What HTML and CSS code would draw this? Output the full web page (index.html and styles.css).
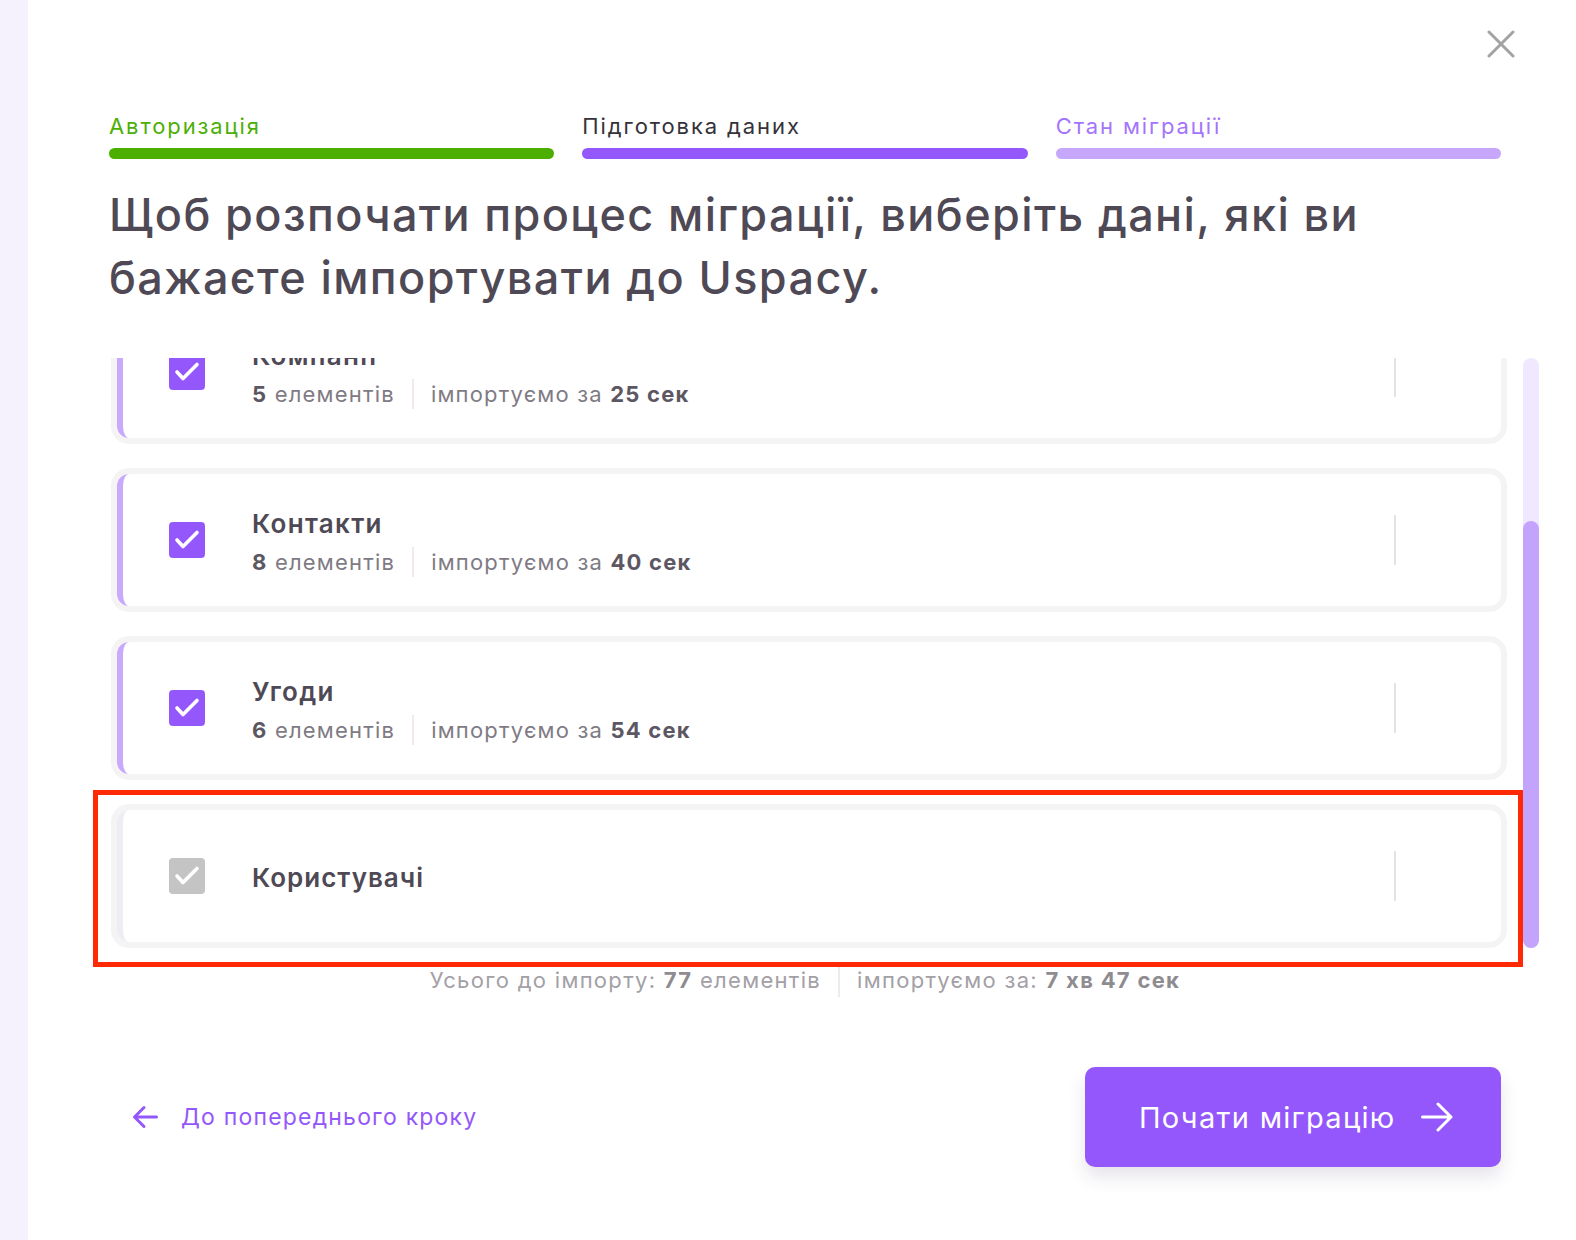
FILE: index.html
```html
<!DOCTYPE html>
<html lang="uk">
<head>
<meta charset="utf-8">
<title>Міграція даних</title>
<link rel="stylesheet" href="styles.css">
</head>
<body>
<div class="page">
  <aside class="side"></aside>
  <main class="modal">
    <div class="modal-top">
      <button class="close" aria-label="Закрити">
        <svg viewBox="0 0 28 28" width="28" height="28"><path d="M2 2 L26 26 M26 2 L2 26" fill="none" stroke="#a3a3a3" stroke-width="3" stroke-linecap="round"/></svg>
      </button>
    </div>
    <ol class="steps">
      <li class="step step-done"><span class="step-label">Авторизація</span><span class="step-bar"></span></li>
      <li class="step step-current"><span class="step-label">Підготовка даних</span><span class="step-bar"></span></li>
      <li class="step step-next"><span class="step-label">Стан міграції</span><span class="step-bar"></span></li>
    </ol>
    <h1 class="title">Щоб розпочати процес міграції, виберіть дані, які ви бажаєте імпортувати до Uspacy.</h1>
    <div class="list-area">
      <div class="scroll">
        <div class="list">
          <div class="card">
            <div class="card-body">
              <span class="check"><svg viewBox="0 0 36 36" width="36" height="36"><polyline points="8,18 14,24.5 28,10.5" fill="none" stroke="#fff" stroke-width="3.6" stroke-linecap="round" stroke-linejoin="round"/></svg></span>
              <div class="info">
                <div class="name">Компанії</div>
                <div class="meta"><span><b>5</b> елементів</span><span class="sep"></span><span>імпортуємо за <b>25 сек</b></span></div>
              </div>
              <span class="divider"></span>
            </div>
          </div>
          <div class="card">
            <div class="card-body">
              <span class="check"><svg viewBox="0 0 36 36" width="36" height="36"><polyline points="8,18 14,24.5 28,10.5" fill="none" stroke="#fff" stroke-width="3.6" stroke-linecap="round" stroke-linejoin="round"/></svg></span>
              <div class="info">
                <div class="name">Контакти</div>
                <div class="meta"><span><b>8</b> елементів</span><span class="sep"></span><span>імпортуємо за <b>40 сек</b></span></div>
              </div>
              <span class="divider"></span>
            </div>
          </div>
          <div class="card">
            <div class="card-body">
              <span class="check"><svg viewBox="0 0 36 36" width="36" height="36"><polyline points="8,18 14,24.5 28,10.5" fill="none" stroke="#fff" stroke-width="3.6" stroke-linecap="round" stroke-linejoin="round"/></svg></span>
              <div class="info">
                <div class="name">Угоди</div>
                <div class="meta"><span><b>6</b> елементів</span><span class="sep"></span><span>імпортуємо за <b>54 сек</b></span></div>
              </div>
              <span class="divider"></span>
            </div>
          </div>
          <div class="card card-disabled">
            <div class="card-body">
              <span class="check"><svg viewBox="0 0 36 36" width="36" height="36"><polyline points="8,18 14,24.5 28,10.5" fill="none" stroke="#fff" stroke-width="3.6" stroke-linecap="round" stroke-linejoin="round"/></svg></span>
              <div class="info">
                <div class="name">Користувачі</div>
              </div>
              <span class="divider"></span>
            </div>
          </div>
        </div>
      </div>
      <div class="scrollbar"><div class="thumb"></div></div>
    </div>
    <p class="summary">Усього до імпорту: <b>77</b> елементів<span class="sep"></span>імпортуємо за: <b>7 хв 47 сек</b></p>
    <div class="actions">
      <a class="back" href="#">
        <svg viewBox="0 0 26 24" width="26" height="24"><path d="M24.5 12 H2.5 M12 2.5 L2.5 12 L12 21.5" fill="none" stroke="#9457fb" stroke-width="3" stroke-linecap="round" stroke-linejoin="round"/></svg>
        <span>До попереднього кроку</span>
      </a>
      <button class="start">
        <span>Почати міграцію</span>
        <svg viewBox="0 0 32 30" width="32" height="30"><path d="M1.5 15 H30 M17 2 L30 15 L17 28" fill="none" stroke="#fff" stroke-width="3" stroke-linecap="round" stroke-linejoin="round"/></svg>
      </button>
    </div>
  </main>
</div>
<div class="highlight"></div>
</body>
</html>
```

FILE: styles.css
```css
* { box-sizing: border-box; }

html, body {
  margin: 0;
  padding: 0;
  background: #ffffff;
}

body {
  font-family: Inter, "Noto Sans", "DejaVu Sans", sans-serif;
  color: #4e4955;
  position: relative;
}

.page {
  display: flex;
  min-height: 1240px;
}

.side {
  width: 28px;
  flex-shrink: 0;
  background: #f5f2fd;
}

.modal {
  flex: 1;
  padding: 0 75px 0 81px;
}

.modal-top {
  height: 112px;
  display: flex;
  justify-content: flex-end;
  align-items: flex-start;
}

.close {
  margin-top: 30px;
  margin-right: -14px;
  width: 28px;
  height: 28px;
  padding: 0;
  border: 0;
  background: none;
  display: block;
}

.close svg { display: block; }

.steps {
  list-style: none;
  margin: 0;
  padding: 0;
  display: flex;
  gap: 28px;
}

.step {
  flex: 1;
  display: flex;
  flex-direction: column;
}

.step-label {
  font-size: 22px;
  line-height: 28px;
  letter-spacing: 1.9px;
}

.step-bar {
  display: block;
  height: 11px;
  margin-top: 8px;
  border-radius: 6px;
}

.step-done .step-label { color: #4caf05; }
.step-done .step-bar { background: #4caf00; }
.step-current .step-label { color: #35323a; }
.step-current .step-bar { background: #9457fb; }
.step-next .step-label { color: #a474fc; }
.step-next .step-bar { background: #c7a7fc; }

.title {
  margin: 24px 0 0;
  font-size: 45px;
  line-height: 63px;
  font-weight: 500;
  letter-spacing: 1.4px;
  color: #4e4955;
}

.list-area {
  margin-top: 49px;
  margin-right: -38px;
  height: 590px;
  display: flex;
  gap: 16px;
}

.scroll {
  flex: 1;
  min-width: 0;
  padding-left: 2px;
  display: flex;
  flex-direction: column-reverse;
  overflow: hidden;
}

.scrollbar {
  width: 16px;
  flex-shrink: 0;
  border-radius: 8px;
  background: #f0e8fe;
  display: flex;
  flex-direction: column;
  justify-content: flex-end;
}

.thumb {
  height: 427px;
  border-radius: 8px;
  background: #c4a3fc;
}

.list {
  flex-shrink: 0;
  display: flex;
  flex-direction: column;
  gap: 24px;
}

.card {
  height: 144px;
  border: 6px solid #f4f4f4;
  border-radius: 18px;
  background: #fff;
}

.card-body {
  height: 100%;
  border-left: 6px solid #c9a9fc;
  border-radius: 12px 0 0 12px;
  display: flex;
  align-items: center;
  padding-left: 46px;
}

.check {
  width: 36px;
  height: 36px;
  flex-shrink: 0;
  border-radius: 4px;
  background: #9457fb;
  display: flex;
}

.check svg { display: block; }

.info {
  margin-left: 47px;
  padding-top: 5px;
  flex: 1;
  display: flex;
  flex-direction: column;
  gap: 8px;
}

.name {
  font-size: 26px;
  line-height: 30px;
  font-weight: 600;
  letter-spacing: 1.3px;
  color: #4e4955;
}

.meta {
  display: flex;
  align-items: center;
  font-size: 22px;
  line-height: 30px;
  letter-spacing: 1.2px;
  color: #7f7b84;
}

.meta b {
  font-weight: 700;
  color: #5c5762;
}

.meta .sep {
  width: 2px;
  height: 30px;
  margin: 0 17px;
  background: #f2eaea;
}

.divider {
  width: 2px;
  height: 50px;
  margin-right: 105px;
  background: #e3e3e3;
  flex-shrink: 0;
}

.card-disabled .card-body { border-left-color: #efedf3; }
.card-disabled .check { background: #c4c4c4; }
.card-disabled .info { padding-top: 3px; }
.card-disabled .name { letter-spacing: 1px; }

.summary {
  margin: 17px 0 0;
  text-align: center;
  font-size: 22px;
  line-height: 30px;
  letter-spacing: 1.3px;
  color: #a3a0a6;
}

.summary b {
  font-weight: 700;
  color: #8e8b91;
}

.summary .sep {
  display: inline-block;
  width: 2px;
  height: 30px;
  margin: 0 17px;
  vertical-align: middle;
  background: #efebeb;
}

.actions {
  margin-top: 70px;
  display: flex;
  justify-content: space-between;
  align-items: center;
}

.back {
  display: flex;
  align-items: center;
  gap: 23px;
  padding-left: 23px;
  color: #9457fb;
  font-size: 23px;
  letter-spacing: 1.2px;
  text-decoration: none;
}

.back svg { display: block; }

.start {
  width: 416px;
  height: 100px;
  border: 0;
  border-radius: 10px;
  background: #9457fb;
  color: #ffffff;
  font-family: Inter, "Noto Sans", sans-serif;
  font-size: 29px;
  letter-spacing: 1.3px;
  display: flex;
  align-items: center;
  gap: 25px;
  padding: 0 0 0 54px;
  box-shadow: 0 10px 18px rgba(60, 40, 90, 0.13);
}

.start svg { display: block; }

.highlight {
  position: absolute;
  left: 93px;
  top: 790px;
  width: 1430px;
  height: 177px;
  border: 5px solid #ff2a05;
  pointer-events: none;
}
```
